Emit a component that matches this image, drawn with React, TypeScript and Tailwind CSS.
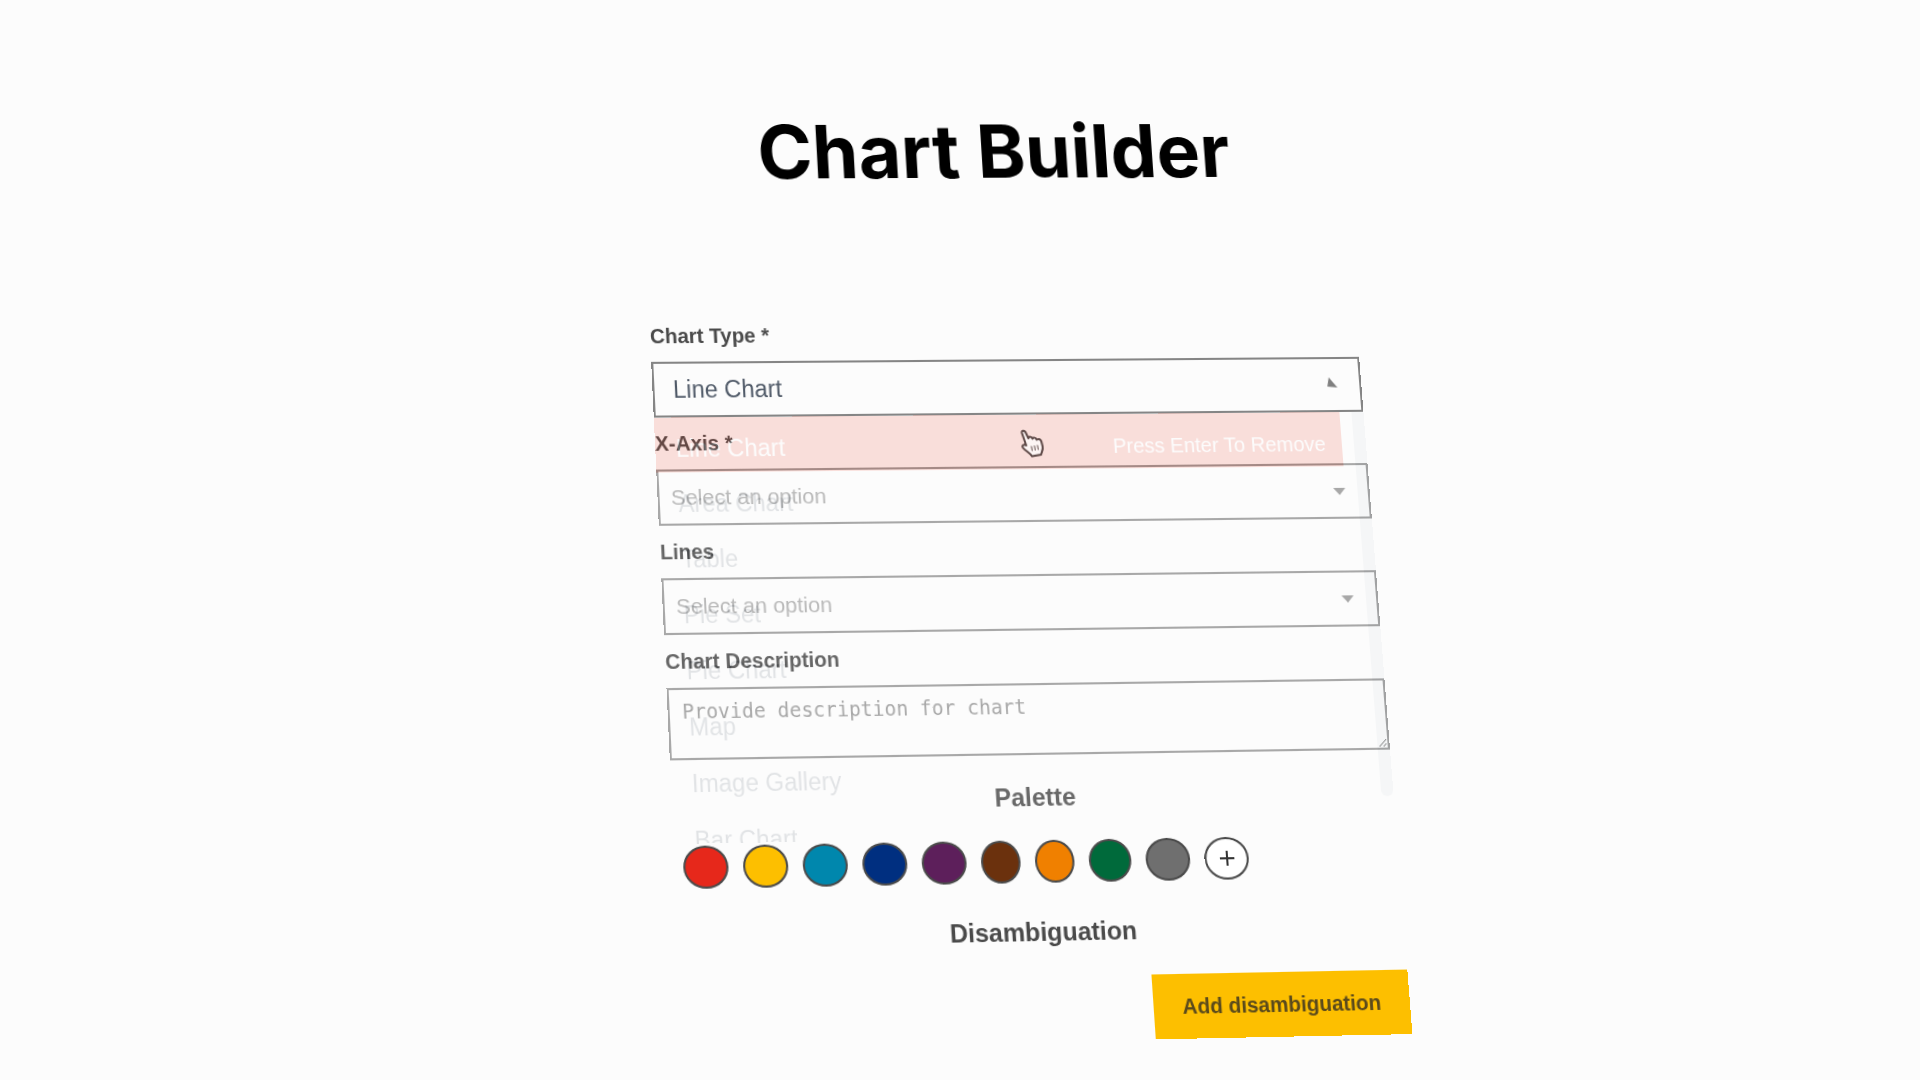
import type { ReactNode } from 'react'

const CHART_TYPES = [
  'Line Chart',
  'Area Chart',
  'Table',
  'Pie Set',
  'Pie Chart',
  'Map',
  'Image Gallery',
  'Bar Chart',
]

const PALETTE = [
  { name: 'Red', className: 'w-[43px] bg-[#e6281b]' },
  { name: 'Yellow', className: 'w-[43px] bg-[#fdbf00]' },
  { name: 'Teal', className: 'w-[43px] bg-[#0087ad]' },
  { name: 'Blue', className: 'w-[43px] bg-[#002f80]' },
  { name: 'Purple', className: 'w-[43px] bg-[#5d1f5b]' },
  { name: 'Brown', className: 'w-[38px] bg-[#6b310d]' },
  { name: 'Orange', className: 'w-[38px] bg-[#f08000]' },
  { name: 'Green', className: 'w-[41px] bg-[#006a3b]' },
  { name: 'Grey', className: 'w-[43px] bg-[#6f6f6f]' },
]

interface FieldProps {
  id: string
  label: string
  children: ReactNode
}

function Field({ id, label, children }: FieldProps) {
  return (
    <div>
      <label htmlFor={id} className="flex h-[50px] items-center text-xl font-bold text-[#4a4a4a]">
        {label}
      </label>
      {children}
    </div>
  )
}

interface SelectFieldProps {
  id: string
  label: string
  placeholder: string
}

function SelectField({ id, label, placeholder }: SelectFieldProps) {
  return (
    <Field id={id} label={label}>
      <div className="relative">
        <select
          id={id}
          className="block h-[54px] w-full appearance-none border-2 border-[#999] pl-[11px] text-[21px] text-[#adadad] outline-none"
        >
          <option>{placeholder}</option>
        </select>
        <svg viewBox="0 0 12 7" className="absolute top-6 right-6 h-[7px] w-3 fill-[#999]">
          <path d="M0 0H12L6 7Z" />
        </svg>
      </div>
    </Field>
  )
}

function ChartTypeMenu() {
  return (
    <div className="pointer-events-none absolute inset-x-0 top-full flex h-[404px] overflow-hidden bg-white opacity-15">
      <ul className="flex-1 text-[23px] text-[#4a5868]">
        {CHART_TYPES.map((type, i) => (
          <li
            key={type}
            className={
              i === 0
                ? 'flex h-[53px] items-center justify-between bg-[#ec3620] pt-2 pr-4 pl-5 text-white'
                : 'flex h-[53px] items-center pt-2 pl-5'
            }
          >
            <span>{type}</span>
            {i === 0 && <span className="text-xl">Press Enter To Remove</span>}
          </li>
        ))}
      </ul>
      <div className="flex w-6 justify-end">
        <div className="h-[370px] w-3 rounded-b-full bg-gray-300" />
      </div>
    </div>
  )
}

function HandCursor() {
  return (
    <svg
      viewBox="0 0 24 28"
      className="pointer-events-none absolute top-[68px] left-[356px] h-7 w-6 fill-white/70 stroke-[#5f4a48] stroke-2"
      strokeLinejoin="round"
      strokeLinecap="round"
    >
      <path d="M6 16L2.500 4C2 1.500 5 .8 6 3L8.500 9C9 7 12 7.200 12.500 9.500C13.500 8 16 8.300 16.500 10.500C18 9.300 20.500 10 21 12L22 17C22.500 20 21 22 20 25L11 26.500C9 23 5 21.500 2.500 18C1.500 16 4 14.500 6 16Z" />
      <path d="M11 17L11.500 21M14 16.500L14.500 20.500M17 16L17.500 20" className="stroke-1" />
    </svg>
  )
}

export default function App() {
  return (
    <div className="min-h-screen overflow-hidden bg-[#fcfcfc] pl-[50px] font-['Liberation_Sans',Arial,sans-serif]">
      <main className="mx-auto w-full max-w-[698px] origin-top [transform:perspective(3000px)_rotateY(3.4deg)_rotateX(8deg)_skewX(3.1deg)]">
        <h1 className="pt-[104px] text-center font-['Inter',sans-serif] text-[73px] leading-[96px] font-bold text-black">
          Chart Builder
        </h1>

        <form className="pt-[107px]" onSubmit={e => e.preventDefault()}>
          <Field id="chart-type" label="Chart Type *">
            <div className="relative z-10">
              <select
                id="chart-type"
                className="block h-[54px] w-full appearance-none border-2 border-[#858585] pl-[18px] text-[23px] text-[#505a68] outline-none"
              >
                {CHART_TYPES.map(type => (
                  <option key={type}>{type}</option>
                ))}
              </select>
              <svg viewBox="0 0 10 10" className="absolute top-5 right-6 size-[10px] fill-[#808080]">
                <path d="M2 0L10 10L0 9Z" />
              </svg>
              <ChartTypeMenu />
              <HandCursor />
            </div>
          </Field>

          <SelectField id="x-axis" label="X-Axis *" placeholder="Select an option" />
          <SelectField id="lines" label="Lines" placeholder="Select an option" />

          <Field id="description" label="Chart Description">
            <textarea
              id="description"
              placeholder="Provide description for chart"
              className="block h-[68px] w-full resize border-2 border-[#999] px-3 py-2 font-['DejaVu_Sans_Mono',monospace] text-[19px] leading-6 outline-none placeholder:text-[#999]"
            />
          </Field>

          <h2 className="pt-6 text-center text-2xl leading-8 font-bold text-[#4f4f4f]">Palette</h2>

          <div className="flex gap-[14px] pt-6 pl-2">
            {PALETTE.map(color => (
              <button
                key={color.name}
                type="button"
                aria-label={color.name}
                className={`h-10 rounded-[50%] border-2 border-[#4a4a4a] ${color.className}`}
              />
            ))}
            <button
              type="button"
              aria-label="Add color"
              className="flex h-10 w-[43px] items-center justify-center rounded-[50%] border-2 border-[#4a4a4a] bg-white"
            >
              <svg viewBox="0 0 14 14" className="size-[14px] stroke-[#333] stroke-2">
                <path d="M7 0V14M0 7H14" />
              </svg>
            </button>
          </div>

          <h2 className="pt-[30px] text-center text-2xl leading-8 font-bold text-[#4a4a4a]">Disambiguation</h2>

          <div className="flex justify-end pt-[25px]">
            <button type="button" className="h-[60px] bg-[#fdbf00] px-7 text-xl font-bold text-[#5a4a1c]">
              Add disambiguation
            </button>
          </div>
        </form>
      </main>
    </div>
  )
}
